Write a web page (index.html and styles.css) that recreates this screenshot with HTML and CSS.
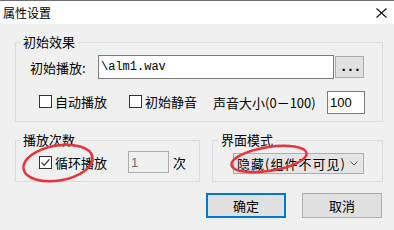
FILE: index.html
```html
<!DOCTYPE html>
<html lang="zh-CN">
<head>
<meta charset="utf-8">
<title>属性设置</title>
<link rel="stylesheet" href="styles.css">
</head>
<body>
<div class="win">
  <div class="titlebar">
    <span class="title">属性设置</span>
    <svg class="close" width="11" height="10" viewBox="0 0 11 10"><path d="M0.5 0.5 L10.5 9.5 M10.5 0.5 L0.5 9.5" stroke="#111" stroke-width="1.1" fill="none"/></svg>
  </div>
  <div class="content">
    <div class="group g1">
      <div class="legend">初始效果</div>
      <div class="row r1">
        <span class="lbl">初始播放:</span>
        <div class="input path">\alm1.wav</div>
        <div class="btn small">...</div>
      </div>
      <div class="row r2">
        <div class="cbitem up"><span class="cb"></span><span>自动播放</span></div>
        <div class="cbitem up second"><span class="cb"></span><span>初始静音</span></div>
        <span class="vol">声音大小(0－100)</span>
        <div class="input num">100</div>
      </div>
    </div>
    <div class="groups">
      <div class="group g2">
        <div class="legend">播放次数</div>
        <div class="row r3">
          <div class="cbitem"><span class="cb checked"><svg width="11" height="11" viewBox="0 0 11 11"><path d="M1.5 5.5 L4.2 8.2 L9.5 2.2" stroke="#444" stroke-width="1.3" fill="none"/></svg></span><span>循环播放</span></div>
          <div class="input count">1</div>
          <span class="unit">次</span>
        </div>
      </div>
      <div class="group g3">
        <div class="legend">界面模式</div>
        <div class="row r4">
          <div class="select"><span class="seltext">隐藏(组件不可见)</span><svg class="chev" width="8" height="5" viewBox="0 0 8 5"><path d="M0.5 0.5 L4 4 L7.5 0.5" stroke="#555" stroke-width="1" fill="none"/></svg></div>
        </div>
      </div>
    </div>
    <div class="buttons">
      <div class="btn big default">确定</div>
      <div class="btn big">取消</div>
    </div>
  </div>
  <svg class="marks" width="394" height="230" viewBox="0 0 394 230">
    <ellipse cx="58" cy="163" rx="35" ry="17.5" transform="rotate(-10 58 163)" fill="none" stroke="#e9323a" stroke-width="2.5"/>
    <ellipse cx="269" cy="159" rx="38" ry="12" transform="rotate(-9 269 159)" fill="none" stroke="#e9323a" stroke-width="2.5"/>
  </svg>
</div>
</body>
</html>
```
FILE: styles.css
```css
* { box-sizing: border-box; }
html, body { margin: 0; padding: 0; }
body { background: #f0f0f0; }
.win {
  position: relative;
  width: 394px;
  height: 230px;
  overflow: hidden;
  background: #f0f0f0;
  font-family: "Noto Sans CJK SC", "Liberation Sans", sans-serif;
  font-size: 13px;
  color: #000;
}
.titlebar {
  height: 24px;
  background: #fff;
  border-top: 1px solid #6e6e6e;
  display: flex;
  align-items: center;
  padding-left: 3px;
}
.title { font-size: 12px; line-height: 16px; }
.close { margin-left: auto; margin-right: 7px; }
.content { padding: 18px 11px 0 15px; }
.group { border: 1px solid #dcdcdc; }
.legend {
  width: fit-content;
  height: 16px;
  line-height: 16px;
  margin: -9px 0 -7px 4px;
  padding: 0 3px;
  background: #f0f0f0;
}
.g1 { height: 80px; }
.row { display: flex; align-items: center; }
.r1 { margin-top: 12px; padding-left: 14px; height: 24px; }
.lbl { width: 68px; }
.input {
  background: #fff;
  border: 1px solid #7a7a7a;
  display: flex;
  align-items: center;
  padding-left: 2px;
}
.path {
  width: 236px;
  height: 24px;
  font-family: "Liberation Mono", monospace;
  font-size: 12px;
  margin-right: 1px;
}
.btn {
  background: #e1e1e1;
  border: 1px solid #adadad;
  display: flex;
  align-items: center;
  justify-content: center;
}
.small {
  width: 29px;
  height: 22px;
  font-family: "DejaVu Sans Mono", monospace;
  font-size: 13px;
  font-weight: bold;
  letter-spacing: -1px;
  padding-bottom: 2px;
  padding-left: 1px;
}
.r2 { margin-top: 12px; padding-left: 23px; height: 23px; }
.cbitem { display: flex; align-items: center; gap: 3px; }
.cbitem.up { margin-top: -3px; }
.cbitem.second { margin-left: 22px; }
.cb {
  width: 13px;
  height: 13px;
  border: 1px solid #333;
  background: #fff;
  display: flex;
  align-items: center;
  justify-content: center;
}
.vol { margin-left: 16px; width: 104px; }
.num { margin-left: 10px; width: 38px; height: 23px; font-family: "Liberation Sans", sans-serif; font-size: 13px; }
.groups { display: flex; gap: 12px; margin-top: 18px; }
.g2 { width: 185px; height: 42px; }
.g3 { width: 171px; height: 42px; }
.g3 .legend { margin-left: 5px; }
.r3 { margin-top: 10px; padding-left: 23px; height: 22px; }
.count {
  margin-left: 21px;
  width: 41px;
  height: 22px;
  background: #f0f0f0;
  border-color: #adadad;
  color: #6d6d6d;
  font-family: "Liberation Sans", sans-serif;
  font-size: 13px;
}
.unit { margin-left: 4px; }
.r4 { margin-top: 12px; padding-left: 20px; }
.select {
  width: 131px;
  height: 21px;
  background: #e5e5e5;
  border: 1px solid #adadad;
  display: flex;
  align-items: center;
  padding-left: 3px;
}
.seltext { letter-spacing: 1px; }
.chev { margin-left: auto; margin-right: 5px; }
.buttons { display: flex; justify-content: flex-end; gap: 16px; margin-top: 11px; padding-right: 1px; }
.big { width: 80px; height: 25px; }
.default { border: 2px solid #0078d7; }
.marks { position: absolute; left: 0; top: 0; pointer-events: none; }
```
